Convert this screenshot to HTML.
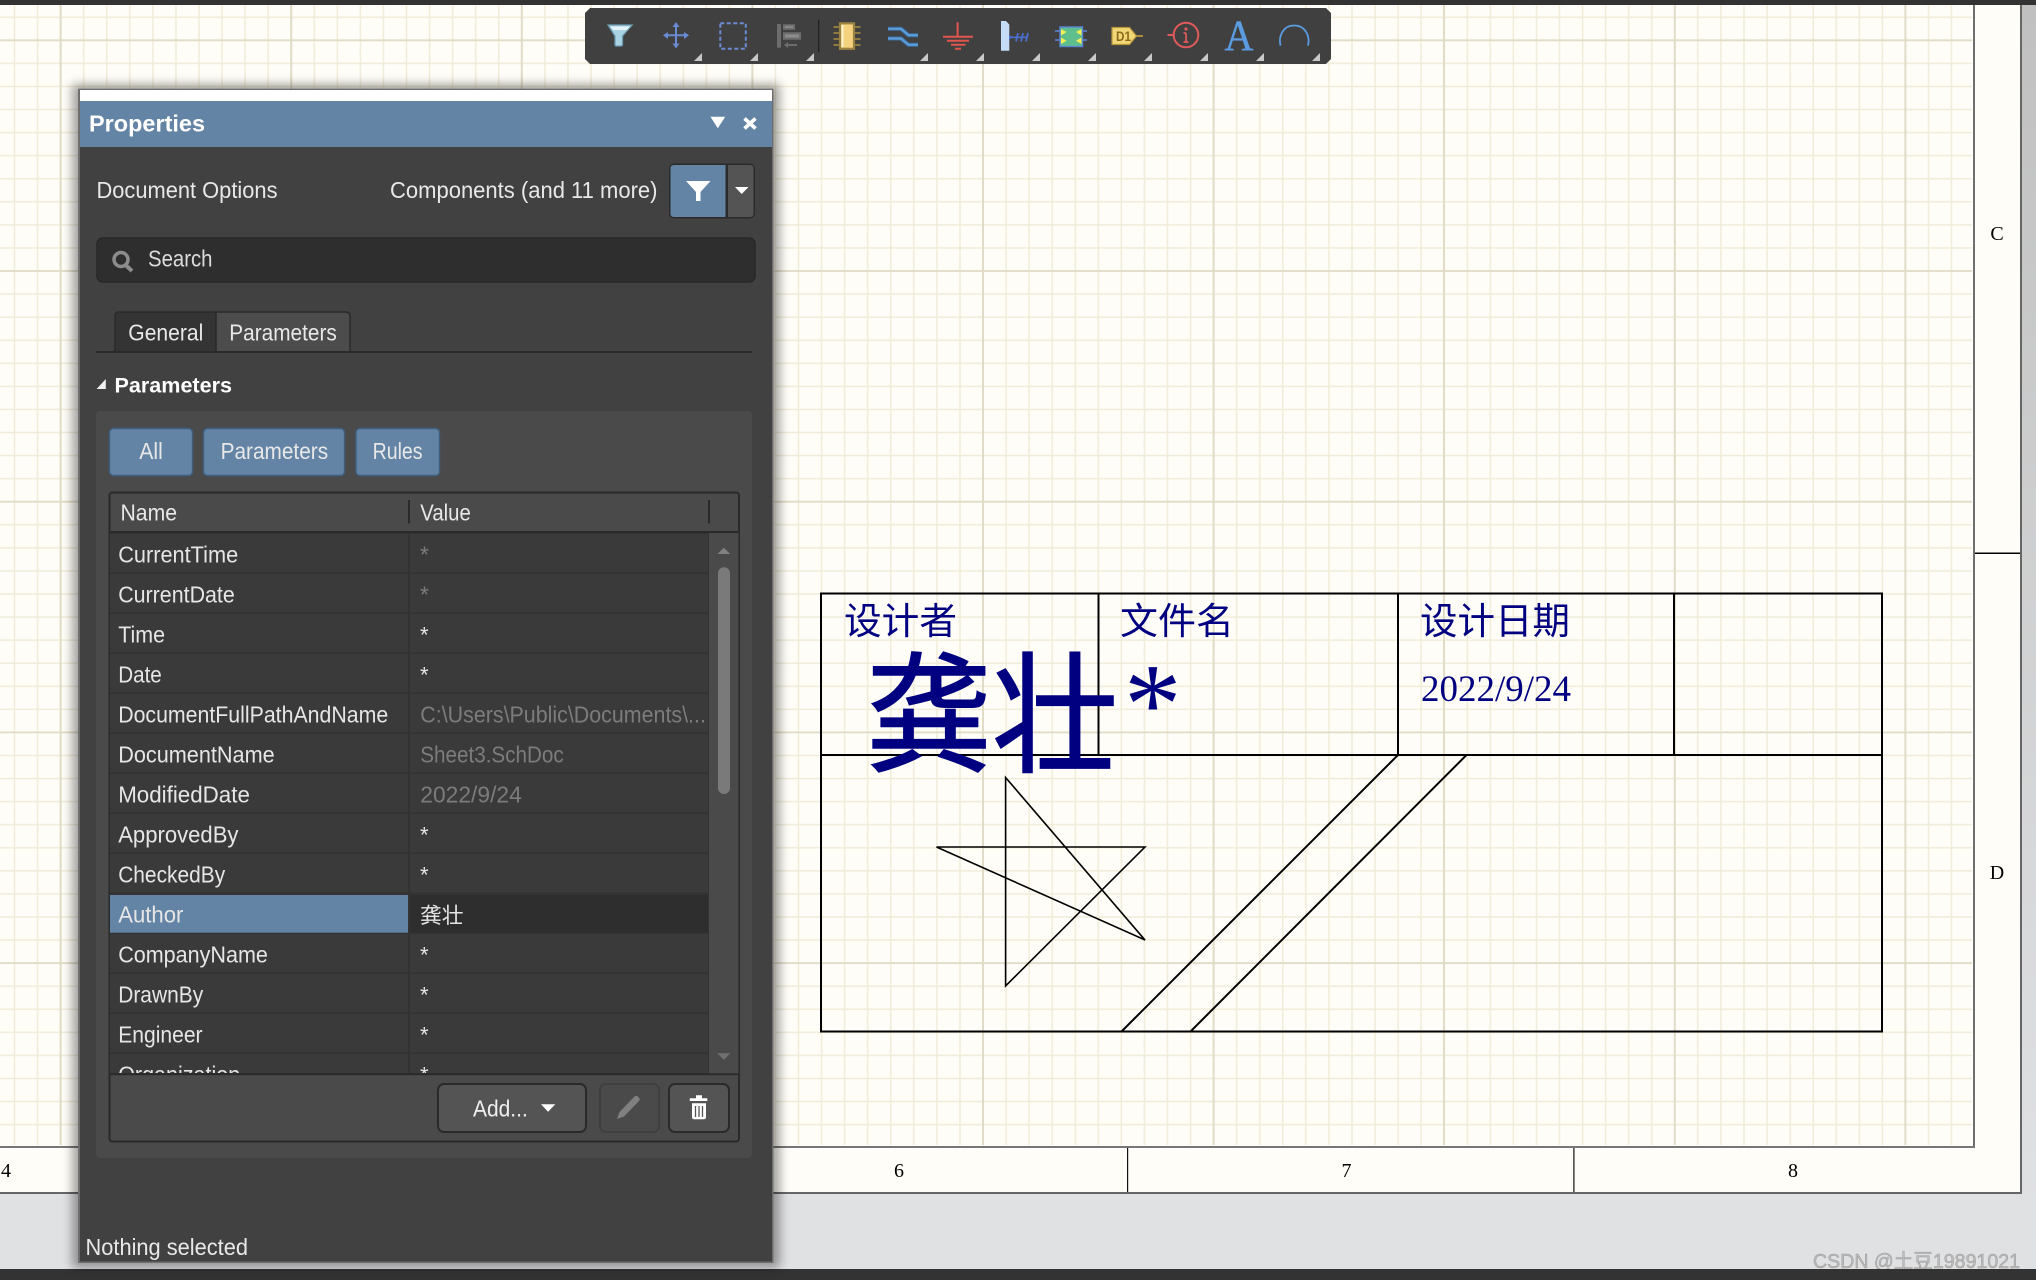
<!DOCTYPE html>
<html lang="zh">
<head>
<meta charset="utf-8">
<title>Properties</title>
<style>
html,body{margin:0;padding:0;width:2036px;height:1280px;overflow:hidden;background:#e0e1e3}
svg{display:block}
text{font-family:"Liberation Sans","Noto Sans CJK SC",sans-serif}
.t{font-size:23px;fill:#e8e8e8}
.n{font-size:23px;fill:#e6e6e6}
.g{font-size:23px;fill:#7c7c7c}
.v{font-size:22px;fill:#e6e6e6}
.s{font-family:"Liberation Serif","Noto Serif CJK SC",serif;font-size:20px;fill:#000}
.c{font-family:"Liberation Sans","Noto Sans CJK SC",sans-serif;fill:#000080;font-size:37px}
.row{fill:#3a3a3a}
.tri{fill:#c8c8c8}
</style>
</head>
<body>
<svg width="2036" height="1280" viewBox="0 0 2036 1280" xmlns="http://www.w3.org/2000/svg">
<defs>
<linearGradient id="side" x1="0" y1="0" x2="0" y2="1">
<stop offset="0" stop-color="#c0c0c0"/><stop offset="1" stop-color="#e2e3e5"/>
</linearGradient>
<pattern id="minV" patternUnits="userSpaceOnUse" x="14.5" y="0" width="23.06" height="100">
<rect x="-0.75" width="1.5" height="100" fill="#f0ecd9"/><rect x="22.31" width="1.5" height="100" fill="#f0ecd9"/>
</pattern>
<pattern id="minH" patternUnits="userSpaceOnUse" x="0" y="17.25" width="100" height="23.07">
<rect y="-0.75" width="100" height="1.5" fill="#f0ecd9"/><rect y="22.32" width="100" height="1.5" fill="#f0ecd9"/>
</pattern>
<filter id="sh" x="-5%" y="-5%" width="110%" height="110%"><feGaussianBlur stdDeviation="5"/></filter>
<clipPath id="rows"><rect x="108" y="533" width="602" height="540"/></clipPath>
</defs>

<!-- window background -->
<rect width="2036" height="1280" fill="url(#side)"/>
<rect x="0" y="1193" width="2036" height="76" fill="#e0e1e3"/>
<!-- sheet -->
<rect x="0" y="0" width="2021" height="1193" fill="#fffdf7"/>
<rect x="0" y="5" width="1972" height="1140" fill="url(#minV)"/>
<rect x="0" y="5" width="1972" height="1140" fill="url(#minH)"/>
<!-- major grid -->
<g fill="#e1dcc7">
<rect x="59.6" y="5" width="2" height="1140"/><rect x="290.2" y="5" width="2" height="1140"/><rect x="520.8" y="5" width="2" height="1140"/><rect x="751.4" y="5" width="2" height="1140"/><rect x="982" y="5" width="2" height="1140"/><rect x="1212.6" y="5" width="2" height="1140"/><rect x="1443" y="5" width="2" height="1140"/><rect x="1673.8" y="5" width="2" height="1140"/><rect x="1904.4" y="5" width="2" height="1140"/>
<rect x="0" y="39.4" width="1972" height="1.8"/><rect x="0" y="270.1" width="1972" height="1.8"/><rect x="0" y="500.8" width="1972" height="1.8"/><rect x="0" y="731.5" width="1972" height="1.8"/><rect x="0" y="962.2" width="1972" height="1.8"/>
</g>
<!-- sheet borders -->
<rect x="1973" y="5" width="2" height="1142" fill="#6f6f6f"/>
<rect x="2020" y="0" width="2" height="1194" fill="#666"/>
<rect x="0" y="1146" width="1975" height="2" fill="#777"/>
<rect x="0" y="1192" width="2022" height="2" fill="#666"/>
<rect x="1975" y="552.5" width="45" height="1.5" fill="#000"/>
<rect x="1127" y="1148" width="1.2" height="44" fill="#111"/>
<rect x="1573.3" y="1148" width="1.2" height="44" fill="#111"/>
<text class="s" x="1997" y="240" text-anchor="middle">C</text>
<text class="s" x="1997" y="879" text-anchor="middle">D</text>
<text class="s" x="899" y="1177" text-anchor="middle">6</text>
<text class="s" x="1346.5" y="1177" text-anchor="middle">7</text>
<text class="s" x="1793" y="1177" text-anchor="middle">8</text>
<text class="s" x="6" y="1177" text-anchor="middle">4</text>

<!-- title block -->
<g fill="none" stroke="#000" stroke-width="2">
<rect x="821" y="593.5" width="1061" height="438"/>
<path d="M1098.5 593.5V755M1398 593.5V755M1674 593.5V755M821 755H1882"/>
<path d="M1398 755L1121.5 1031.5M1466.5 755L1190.5 1031.5" stroke-width="2"/>
<path d="M1005.6 777.5L1145 940L936.5 847H1145L1005.6 986Z" stroke-width="1.6" stroke-linejoin="miter"/>
</g>
<text class="c" x="844" y="634" textLength="113" lengthAdjust="spacingAndGlyphs">设计者</text>
<text class="c" x="1120" y="634" textLength="114" lengthAdjust="spacingAndGlyphs">文件名</text>
<text class="c" x="1420" y="634" textLength="150" lengthAdjust="spacingAndGlyphs">设计日期</text>
<text x="1421" y="701" style="font-family:'Liberation Serif',serif;font-size:37px;fill:#000080" textLength="150" lengthAdjust="spacingAndGlyphs">2022/9/24</text>
<text x="866" y="762" style="font-size:131px;fill:#000080;stroke:#000080;stroke-width:1.5" textLength="252" lengthAdjust="spacingAndGlyphs">龚壮</text>
<text x="1124" y="743" style="font-family:'Liberation Serif',serif;font-size:115px;fill:#000080">*</text>

<!-- top bar, bottom bar -->
<rect width="2036" height="5" fill="#333"/>
<text x="1813" y="1268" style="font-size:20px;fill:#bcbcbc;stroke:#9c9c9c;stroke-width:.5" textLength="207" lengthAdjust="spacingAndGlyphs">CSDN @土豆19891021</text>
<rect y="1269" width="2036" height="11" fill="#333"/>

<!-- toolbar -->
<path d="M590 8H1326L1331 13V59L1326 64H590L585 59V13Z" fill="#404040"/>
<!-- filter -->
<path d="M608 25H632L622.5 36V44.5Q622.5 46 620.5 46H616.5Q615 46 615 44.5V36Z" fill="#a8d4e4" stroke="#6f9db3" stroke-width="1.3"/>
<path d="M610 26.5H630L627 30H613Z" fill="#e6f3f8"/>
<!-- move -->
<path d="M676 24V47M665 35.3H688" stroke="#6a8bd4" stroke-width="2" fill="none"/>
<path d="M676 22L672.5 27H679.5ZM676 48.5L672.5 43.5H679.5ZM663 35.3L668 32V39ZM689 35.3L684 32V39Z" fill="#6a8bd4"/>
<!-- select -->
<rect x="720.3" y="23.3" width="25.5" height="25.5" fill="none" stroke="#6a8bd4" stroke-width="2" stroke-dasharray="4 2.5"/>
<!-- align -->
<rect x="777" y="24" width="4" height="23.7" fill="#6c6c6c"/>
<rect x="783" y="24.3" width="12" height="5.5" fill="#6e6e6e"/><rect x="785" y="26" width="8" height="2" fill="#888"/>
<rect x="783" y="32.3" width="18" height="7.4" fill="#6e6e6e"/><rect x="785" y="34.5" width="14" height="3" fill="#8c8c8c"/>
<path d="M785 45H797" stroke="#6c6c6c" stroke-width="2"/><path d="M784 45L788 42V48Z" fill="#6c6c6c"/>
<rect x="818" y="19.7" width="1.4" height="32" fill="#222"/>
<!-- component -->
<path d="M833.5 27H860.5M833.5 33H860.5M833.5 39H860.5M833.5 45H860.5" stroke="#9a8240" stroke-width="1.8"/>
<rect x="840" y="23.3" width="14" height="25.5" fill="#f5d27e" stroke="#9a8240" stroke-width="2.2"/>
<rect x="841.5" y="25" width="2" height="22" fill="#fdf2d3"/>
<!-- net -->
<path d="M888 28.8H901L908.5 35.2H918M888 38.5H901L908.5 44.8H918" fill="none" stroke="#3c6ea6" stroke-width="4"/>
<path d="M888 28.8H901L908.5 35.2H918M888 38.5H901L908.5 44.8H918" fill="none" stroke="#5d9dd8" stroke-width="2.2"/>
<!-- gnd -->
<path d="M957.6 22.3V36.7M943 36.7H973M947 40.7H969M951 44.7H965.5M955 48.7H961" stroke="#e0564f" stroke-width="2" fill="none"/>
<!-- bus entry -->
<path d="M1001 21H1006L1009.3 24.5V50.7H1001Z" fill="#c5dcf8"/>
<path d="M1009 37.3H1027" stroke="#4a6fd0" stroke-width="1.6"/>
<path d="M1009 34.5L1012 37.3L1009 40" fill="#4a6fd0"/>
<path d="M1016 41.5L1018 33M1021 41.5L1023 33M1026 41.5L1028 33" stroke="#4a6fd0" stroke-width="1.8"/>
<!-- sheet symbol -->
<path d="M1055 31H1060M1055 40H1060M1082 31H1087M1082 40H1087" stroke="#5a86d8" stroke-width="1.4"/>
<rect x="1060" y="27" width="22.5" height="19.5" fill="#5fbf8c" stroke="#5a86d8" stroke-width="1.4"/>
<path d="M1061 29L1066.5 32L1061 35.5ZM1061 37.5L1066.5 40.7L1061 44ZM1081.5 29L1076 32L1081.5 35.5ZM1081.5 37.5L1076 40.7L1081.5 44Z" fill="#f6ee53"/>
<!-- port -->
<path d="M1136.5 36H1143" stroke="#b8953a" stroke-width="1.8"/>
<path d="M1112 27.5H1129.5L1136.5 36L1129.5 44.5H1112Z" fill="#f0d675" stroke="#b8953a" stroke-width="1.2"/>
<text x="1116" y="41" style="font-size:14px;font-weight:bold;fill:#8a6a1a" textLength="15" lengthAdjust="spacingAndGlyphs">D1</text>
<!-- note -->
<circle cx="1186" cy="35" r="12.3" fill="none" stroke="#e05a5a" stroke-width="2"/>
<path d="M1167.5 35H1173.5" stroke="#e05a5a" stroke-width="2"/>
<path d="M1186 33V42M1183.5 33H1186M1183.5 42H1188.5" stroke="#e05a5a" stroke-width="1.7" fill="none"/>
<circle cx="1186" cy="29" r="1.6" fill="#e05a5a"/>
<!-- text A -->
<text x="1224.5" y="50" style="font-family:'Liberation Serif',serif;font-size:43px;fill:#5b9bdf;stroke:#5b9bdf;stroke-width:.5" textLength="29" lengthAdjust="spacingAndGlyphs">A</text>
<!-- arc -->
<path d="M1280.5 45.7C1278 35 1284 25.5 1294.2 25.5C1304.5 25.5 1310.5 35 1308 45.7" fill="none" stroke="#5b9bdf" stroke-width="1.8"/>
<!-- corner marks -->
<g class="tri">
<path d="M702 53V61H694Z"/><path d="M758 53V61H750Z"/><path d="M814 53V61H806Z"/><path d="M928 53V61H920Z"/><path d="M984 53V61H976Z"/><path d="M1040 53V61H1032Z"/><path d="M1096 53V61H1088Z"/><path d="M1152 53V61H1144Z"/><path d="M1208 53V61H1200Z"/><path d="M1264 53V61H1256Z"/><path d="M1320 53V61H1312Z"/>
</g>

<!-- properties panel -->
<rect x="72" y="84" width="708" height="1184" fill="#000" opacity=".35" filter="url(#sh)"/>
<rect x="78" y="88.7" width="695.5" height="1174.3" fill="#6e6e6e"/>
<rect x="80" y="90" width="692" height="11" fill="#fff"/>
<rect x="80" y="101" width="692" height="46" fill="#6384a5"/>
<rect x="80" y="147" width="692" height="1114.5" fill="#414141"/>
<text x="89" y="131.5" style="font-size:23.5px;font-weight:bold;fill:#fff" textLength="116" lengthAdjust="spacingAndGlyphs">Properties</text>
<path d="M710.5 116.7H725.2L717.8 128.3Z" fill="#fff"/>
<path d="M744.5 118.5L755.5 128.5M755.5 118.5L744.5 128.5" stroke="#fff" stroke-width="3.6"/>

<text class="t" x="96.5" y="198" textLength="181" lengthAdjust="spacingAndGlyphs">Document Options</text>
<text class="t" x="390" y="198" textLength="267.5" lengthAdjust="spacingAndGlyphs">Components (and 11 more)</text>
<rect x="669" y="163.5" width="86" height="55" rx="5" fill="#2b2b2b"/>
<path d="M674 165H725.5V217H674Q670.5 217 670.5 213.5V168.5Q670.5 165 674 165Z" fill="#6384a5"/>
<path d="M728 165H750Q753.5 165 753.5 168.5V213.5Q753.5 217 750 217H728Z" fill="#545454"/>
<path d="M686 181H710.5L700.5 192V201H696V192Z" fill="#fff"/>
<path d="M735 187H748.5L741.7 194Z" fill="#fff"/>

<rect x="97" y="238" width="658" height="44" rx="6" fill="#2e2e2e" stroke="#282828" stroke-width="1.5"/>
<circle cx="121" cy="259.5" r="7" fill="none" stroke="#8c8c8c" stroke-width="3.5"/>
<path d="M125.5 265L132 271" stroke="#8c8c8c" stroke-width="4"/>
<text class="t" x="148" y="266.7" textLength="64.5" lengthAdjust="spacingAndGlyphs" style="fill:#dcdcdc">Search</text>

<path d="M115 352V316Q115 312 119 312H216V352Z" fill="#343434" stroke="#2a2a2a" stroke-width="1.5"/>
<path d="M216 352V312H345Q350 312 350 316V352Z" fill="#4c4c4c" stroke="#2a2a2a" stroke-width="1.5"/>
<text class="t" x="128.3" y="340.7" textLength="75" lengthAdjust="spacingAndGlyphs">General</text>
<text class="t" x="229.3" y="340.7" textLength="107.5" lengthAdjust="spacingAndGlyphs">Parameters</text>
<rect x="96" y="351" width="656" height="2" fill="#2a2a2a"/>

<path d="M105.8 379V389H96.6Z" fill="#f0f0f0"/>
<text x="114.5" y="392.7" style="font-size:21.5px;font-weight:bold;fill:#fff" textLength="117.5" lengthAdjust="spacingAndGlyphs">Parameters</text>

<rect x="96" y="411" width="656" height="747" rx="4" fill="#4a4a4a"/>
<g fill="#6384a5" stroke="#3f5f80" stroke-width="1.4">
<rect x="109.5" y="428.5" width="83" height="47" rx="4"/>
<rect x="203.5" y="428.5" width="141" height="47" rx="4"/>
<rect x="356" y="428.5" width="83.5" height="47" rx="4"/>
</g>
<text class="t" x="139.3" y="459" textLength="23.5" lengthAdjust="spacingAndGlyphs">All</text>
<text class="t" x="220.6" y="459" textLength="107.5" lengthAdjust="spacingAndGlyphs">Parameters</text>
<text class="t" x="372.6" y="459" textLength="50" lengthAdjust="spacingAndGlyphs">Rules</text>

<!-- table -->
<rect x="109.5" y="492.5" width="629.5" height="649" rx="3" fill="#4a4a4a" stroke="#2a2a2a" stroke-width="2"/>
<rect x="110" y="531" width="629" height="2" fill="#2a2a2a"/>
<rect x="408" y="500" width="2" height="23.5" fill="#2a2a2a"/>
<rect x="708" y="500" width="2" height="23.5" fill="#2a2a2a"/>
<text class="t" x="120.5" y="520.7" textLength="56.5" lengthAdjust="spacingAndGlyphs">Name</text>
<text class="t" x="420.3" y="520.7" textLength="50.5" lengthAdjust="spacingAndGlyphs">Value</text>

<rect x="110" y="533" width="599" height="541" fill="#333"/>
<g clip-path="url(#rows)">
<g class="row">
<rect x="110" y="534" width="298" height="38.5"/><rect x="410" y="534" width="298" height="38.5"/>
<rect x="110" y="574" width="298" height="38.5"/><rect x="410" y="574" width="298" height="38.5"/>
<rect x="110" y="614" width="298" height="38.5"/><rect x="410" y="614" width="298" height="38.5"/>
<rect x="110" y="654" width="298" height="38.5"/><rect x="410" y="654" width="298" height="38.5"/>
<rect x="110" y="694" width="298" height="38.5"/><rect x="410" y="694" width="298" height="38.5"/>
<rect x="110" y="734" width="298" height="38.5"/><rect x="410" y="734" width="298" height="38.5"/>
<rect x="110" y="774" width="298" height="38.5"/><rect x="410" y="774" width="298" height="38.5"/>
<rect x="110" y="814" width="298" height="38.5"/><rect x="410" y="814" width="298" height="38.5"/>
<rect x="110" y="854" width="298" height="38.5"/><rect x="410" y="854" width="298" height="38.5"/>
<rect x="110" y="934" width="298" height="38.5"/><rect x="410" y="934" width="298" height="38.5"/>
<rect x="110" y="974" width="298" height="38.5"/><rect x="410" y="974" width="298" height="38.5"/>
<rect x="110" y="1014" width="298" height="38.5"/><rect x="410" y="1014" width="298" height="38.5"/>
<rect x="110" y="1054" width="298" height="38.5"/><rect x="410" y="1054" width="298" height="38.5"/>
</g>
<rect x="110" y="895" width="298" height="37.7" fill="#6384a5"/>
<rect x="410" y="895" width="298" height="37.7" fill="#2e2e2e"/>
<text class="n" x="118.2" y="562.7" textLength="120" lengthAdjust="spacingAndGlyphs">CurrentTime</text>
<text class="n" x="118.2" y="602.7" textLength="116.6" lengthAdjust="spacingAndGlyphs">CurrentDate</text>
<text class="n" x="118.2" y="642.7" textLength="46.8" lengthAdjust="spacingAndGlyphs">Time</text>
<text class="n" x="118.2" y="682.7" textLength="43.6" lengthAdjust="spacingAndGlyphs">Date</text>
<text class="n" x="118.2" y="722.7" textLength="270" lengthAdjust="spacingAndGlyphs">DocumentFullPathAndName</text>
<text class="n" x="118.2" y="762.7" textLength="156.5" lengthAdjust="spacingAndGlyphs">DocumentName</text>
<text class="n" x="118.2" y="802.7" textLength="131.7" lengthAdjust="spacingAndGlyphs">ModifiedDate</text>
<text class="n" x="118.2" y="842.7" textLength="120.3" lengthAdjust="spacingAndGlyphs">ApprovedBy</text>
<text class="n" x="118.2" y="882.7" textLength="107" lengthAdjust="spacingAndGlyphs">CheckedBy</text>
<text class="n" x="118.2" y="922.7" textLength="65.2" lengthAdjust="spacingAndGlyphs">Author</text>
<text class="n" x="118.2" y="962.7" textLength="149.7" lengthAdjust="spacingAndGlyphs">CompanyName</text>
<text class="n" x="118.2" y="1002.7" textLength="85" lengthAdjust="spacingAndGlyphs">DrawnBy</text>
<text class="n" x="118.2" y="1042.7" textLength="84.4" lengthAdjust="spacingAndGlyphs">Engineer</text>
<text class="n" x="118.2" y="1082.7" textLength="122" lengthAdjust="spacingAndGlyphs">Organization</text>
<text class="g" x="420" y="562.7">*</text>
<text class="g" x="420" y="602.7">*</text>
<text class="v" x="420" y="642.7">*</text>
<text class="v" x="420" y="682.7">*</text>
<text class="g" x="420.3" y="722.7" textLength="285.6" lengthAdjust="spacingAndGlyphs">C:\Users\Public\Documents\...</text>
<text class="g" x="420.3" y="762.7" textLength="143.4" lengthAdjust="spacingAndGlyphs">Sheet3.SchDoc</text>
<text class="g" x="420.3" y="802.7" textLength="101.5" lengthAdjust="spacingAndGlyphs">2022/9/24</text>
<text class="v" x="420" y="842.7">*</text>
<text class="v" x="420" y="882.7">*</text>
<text class="v" x="420" y="923" style="font-size:21.5px" textLength="43.5" lengthAdjust="spacingAndGlyphs">龚壮</text>
<text class="v" x="420" y="962.7">*</text>
<text class="v" x="420" y="1002.7">*</text>
<text class="v" x="420" y="1042.7">*</text>
<text class="v" x="420" y="1082.7">*</text>
</g>
<!-- scrollbar -->
<rect x="709" y="533" width="29.5" height="541" fill="#4a4a4a"/>
<path d="M723.8 547.7L730.2 554H717.4Z" fill="#808080"/>
<rect x="718" y="567.3" width="12" height="226.7" rx="6" fill="#7a7a7a"/>
<path d="M723.8 1060L730.2 1053.3H717.4Z" fill="#707070"/>
<rect x="110" y="1073.3" width="629" height="1.9" fill="#2a2a2a"/>

<!-- add etc -->
<rect x="438" y="1084" width="148" height="48" rx="6" fill="#545454" stroke="#2a2a2a" stroke-width="2"/>
<text class="t" x="473" y="1116.7" textLength="54.8" lengthAdjust="spacingAndGlyphs" style="fill:#f0f0f0">Add...</text>
<path d="M541 1104.3H555.3L548.1 1111.7Z" fill="#fff"/>
<rect x="600" y="1084" width="59" height="48" rx="6" fill="#4a4a4a" stroke="#404040" stroke-width="2"/>
<path d="M617 1119L619.5 1112L634.5 1096.5Q636.5 1095 638.5 1097Q640.5 1099 639 1101L624 1116.5Z" fill="#808080"/>
<rect x="669" y="1084" width="60" height="48" rx="6" fill="#545454" stroke="#2a2a2a" stroke-width="2"/>
<path d="M696 1098.3V1095.3H702V1098.3H707.3V1101H689.8V1098.3Z" fill="#fff"/>
<path d="M692 1103.3H706V1117Q706 1119.3 703.7 1119.3H694.3Q692 1119.3 692 1117Z" fill="#fff"/>
<path d="M695.5 1106V1117M699 1106V1117M702.5 1106V1117" stroke="#545454" stroke-width="1.3"/>

<text class="t" x="85.5" y="1255" textLength="162.5" lengthAdjust="spacingAndGlyphs">Nothing selected</text>
</svg>
</body>
</html>
